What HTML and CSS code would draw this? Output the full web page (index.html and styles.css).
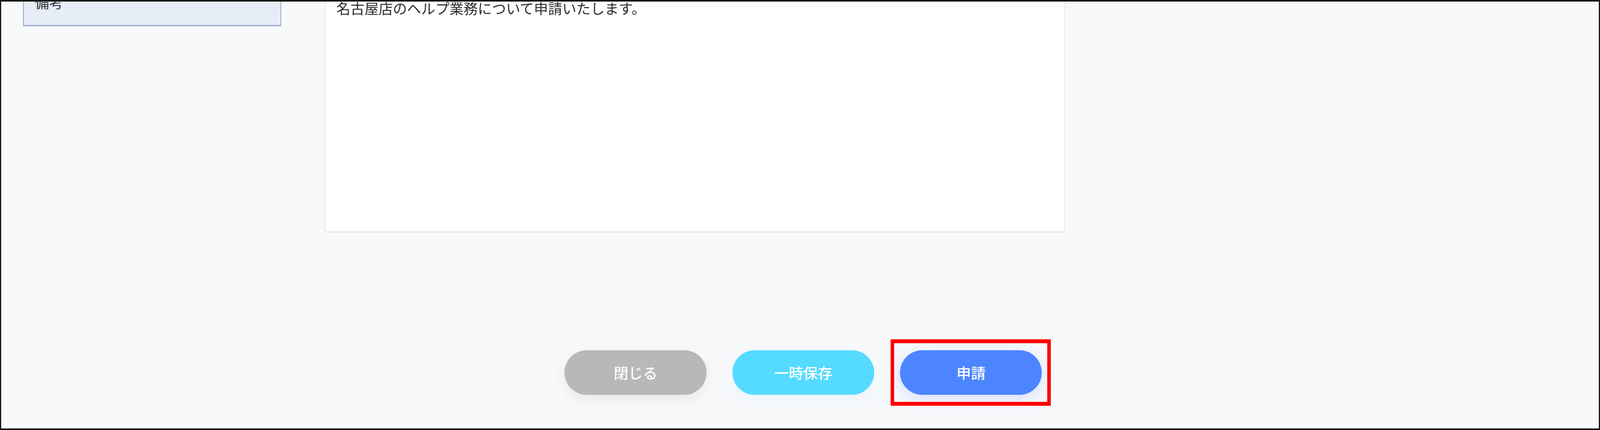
FILE: index.html
```html
<!DOCTYPE html>
<html lang="ja">
<head>
<meta charset="utf-8">
<title>申請</title>
<link rel="stylesheet" href="styles.css">
</head>
<body>
<div class="frame">
  <div class="form-row">
    <div class="label-cell">備考</div>
    <div class="remarks">名古屋店のヘルプ業務について申請いたします。</div>
  </div>
  <div class="actions">
    <button class="btn btn-close" type="button">閉じる</button>
    <button class="btn btn-save" type="button">一時保存</button>
    <div class="highlight">
      <button class="btn btn-apply" type="button">申請</button>
    </div>
  </div>
</div>
</body>
</html>
```
FILE: styles.css
```css
:root {
  --ux: calc(100vw / 4408);
  --uy: calc(100vh / 1100);
}

html, body {
  margin: 0;
  padding: 0;
  overflow: hidden;
  background: #f8f9fb;
}

.frame {
  box-sizing: border-box;
  width: 100vw;
  height: 100vh;
  border-style: solid;
  border-color: #151515;
  border-width: calc(4 * var(--uy)) calc(4 * var(--ux));
  background: #f8f9fb;
  overflow: hidden;
  font-family: "Noto Sans CJK JP", "Noto Sans", sans-serif;
  color: #303133;
}

.form-row {
  display: flex;
  align-items: flex-start;
  margin-top: calc(-60 * var(--uy));
  padding-left: calc(60 * var(--ux));
}

.label-cell {
  box-sizing: border-box;
  width: calc(712 * var(--ux));
  height: calc(123 * var(--uy));
  padding: calc(30 * var(--uy)) 0 0 calc(31 * var(--ux));
  background: #e6edf7;
  border-style: solid;
  border-color: #97a8c8;
  border-width: calc(3 * var(--uy)) calc(3 * var(--ux));
  font-size: calc(39 * var(--ux));
  line-height: calc(57 * var(--uy));
}

.remarks {
  box-sizing: border-box;
  width: calc(2041 * var(--ux));
  height: calc(651 * var(--uy));
  margin-left: calc(119 * var(--ux));
  padding: calc(45 * var(--uy)) 0 0 calc(30 * var(--ux));
  background: #ffffff;
  border-style: solid;
  border-color: #e3e5ea;
  border-width: calc(3 * var(--uy)) calc(3 * var(--ux));
  font-size: calc(39 * var(--ux));
  line-height: calc(57 * var(--uy));
}

.actions {
  display: flex;
  justify-content: center;
  align-items: center;
  gap: calc(71 * var(--ux));
  margin-top: calc(301 * var(--uy));
  padding-left: calc(18 * var(--ux));
}

.btn {
  box-sizing: border-box;
  width: calc(391 * var(--ux));
  height: calc(114 * var(--uy));
  border: none;
  border-radius: 999px;
  color: #ffffff;
  font-family: "Noto Sans CJK JP", "Noto Sans", sans-serif;
  font-size: calc(40 * var(--ux));
  font-weight: 500;
  padding: 0;
  cursor: pointer;
}

.btn-close {
  background: #b8b8b8;
  box-shadow: 0 calc(12 * var(--uy)) calc(36 * var(--uy)) rgba(0, 0, 0, 0.07);
}

.btn-save {
  background: #55dbff;
  box-shadow: 0 calc(12 * var(--uy)) calc(36 * var(--uy)) rgba(85, 180, 255, 0.08);
}

.btn-apply {
  background: #4c85ff;
  box-shadow: 0 calc(10 * var(--uy)) calc(40 * var(--uy)) rgba(76, 133, 255, 0.22);
}

.highlight {
  position: relative;
  display: flex;
}

.highlight::after {
  content: "";
  position: absolute;
  top: calc(-28 * var(--uy));
  bottom: calc(-28 * var(--uy));
  left: calc(-26 * var(--ux));
  right: calc(-24 * var(--ux));
  border-style: solid;
  border-color: #ff0000;
  border-width: calc(10 * var(--uy)) calc(10 * var(--ux));
  pointer-events: none;
}
```
